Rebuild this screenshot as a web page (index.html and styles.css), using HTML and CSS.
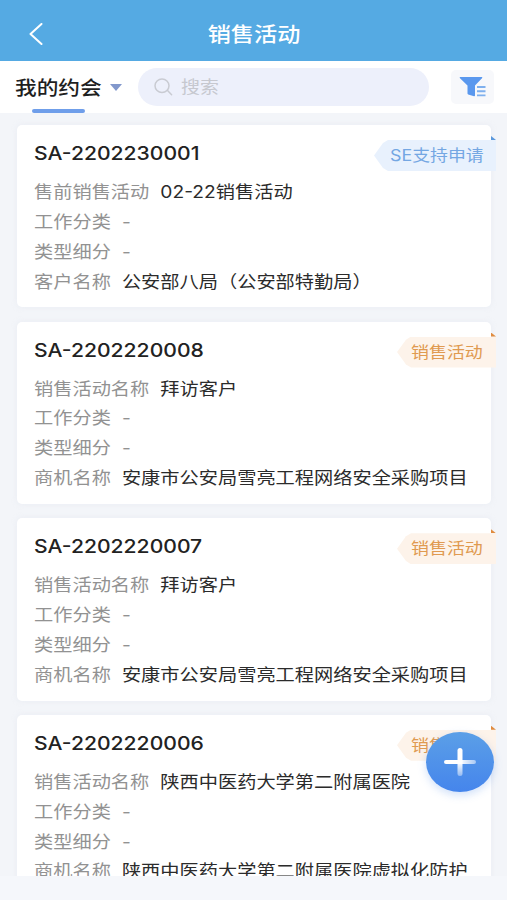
FILE: index.html
```html
<!DOCTYPE html>
<html lang="zh-CN">
<head>
<meta charset="utf-8">
<title>销售活动</title>
<link rel="stylesheet" href="styles.css">
</head>
<body>
<div class="app">
  <header class="header">
    <svg class="back" width="14" height="22" viewBox="0 0 14 22"><path d="M12.5 1 1.5 11l11 10" fill="none" stroke="#fff" stroke-width="2" stroke-linecap="round" stroke-linejoin="round"/></svg>
    <h1 class="header-title wide">销售活动</h1>
  </header>
  <div class="toolbar">
    <div class="tab"><span class="wide tab-label">我的约会</span><i class="caret"></i></div>
    <div class="search">
      <svg width="19" height="18" viewBox="0 0 19 18"><g fill="none" stroke="#c9cbd2" stroke-width="1.5" stroke-linecap="round"><ellipse cx="8" cy="7.7" rx="7" ry="6.7"/><path d="m13.3 12.3 4.3 4.4"/></g></svg>
      <span class="wide placeholder">搜索</span>
    </div>
    <button class="filter" aria-label="筛选"><svg width="28" height="22" viewBox="0 0 28 22"><path d="M1 1h22q.7.500 0 1.300L16 9.500v10q0 1-1 .7L9.200 18.500q-.7-.3-.7-1V9.500L1 2.300Q.3 1.500 1 1z" fill="#5a98ee"/><path d="M18 11h8.500M18 15.200h8.500M18 19.400h8.500" stroke="#7fb0ee" stroke-width="1.900"/></svg></button>
  </div>
  <main class="list">
    <article class="card">
      <h2 class="wide code">SA-2202230001</h2>
      <p class="wide row"><span class="label">售前销售活动</span><span>02-22销售活动</span></p>
      <p class="wide row"><span class="label">工作分类</span><span class="none">-</span></p>
      <p class="wide row"><span class="label">类型细分</span><span class="none">-</span></p>
      <p class="wide row"><span class="label">客户名称</span><span>公安部八局（公安部特勤局）</span></p>
      <div class="badge blue"><span class="wide">SE支持申请</span></div>
    </article>
    <article class="card">
      <h2 class="wide code">SA-2202220008</h2>
      <p class="wide row"><span class="label">销售活动名称</span><span>拜访客户</span></p>
      <p class="wide row"><span class="label">工作分类</span><span class="none">-</span></p>
      <p class="wide row"><span class="label">类型细分</span><span class="none">-</span></p>
      <p class="wide row"><span class="label">商机名称</span><span>安康市公安局雪亮工程网络安全采购项目</span></p>
      <div class="badge"><span class="wide">销售活动</span></div>
    </article>
    <article class="card">
      <h2 class="wide code">SA-2202220007</h2>
      <p class="wide row"><span class="label">销售活动名称</span><span>拜访客户</span></p>
      <p class="wide row"><span class="label">工作分类</span><span class="none">-</span></p>
      <p class="wide row"><span class="label">类型细分</span><span class="none">-</span></p>
      <p class="wide row"><span class="label">商机名称</span><span>安康市公安局雪亮工程网络安全采购项目</span></p>
      <div class="badge"><span class="wide">销售活动</span></div>
    </article>
    <article class="card">
      <h2 class="wide code">SA-2202220006</h2>
      <p class="wide row"><span class="label">销售活动名称</span><span>陕西中医药大学第二附属医院</span></p>
      <p class="wide row"><span class="label">工作分类</span><span class="none">-</span></p>
      <p class="wide row"><span class="label">类型细分</span><span class="none">-</span></p>
      <p class="wide row"><span class="label">商机名称</span><span>陕西中医药大学第二附属医院虚拟化防护</span></p>
      <div class="badge"><span class="wide">销售活动</span></div>
    </article>
  </main>
  <button class="fab" aria-label="新增"><svg width="32" height="28" viewBox="0 0 32 28"><defs><linearGradient id="h"><stop offset="0" stop-color="#fff"/><stop offset=".5" stop-color="#fff"/><stop offset="1" stop-color="#fff" stop-opacity=".5"/></linearGradient><linearGradient id="v" x2="0" y2="1"><stop offset="0" stop-color="#fff"/><stop offset=".5" stop-color="#fff"/><stop offset="1" stop-color="#fff" stop-opacity=".4"/></linearGradient></defs><rect y="12" width="32" height="4" rx="2" fill="url(#h)"/><rect x="13.500" width="5" height="28" rx="2.500" fill="url(#v)"/></svg></button>
</div>
</body>
</html>
```
FILE: styles.css
```css
* { box-sizing: border-box; }
body { margin: 0; font-family: Inter, "Noto Sans CJK SC", sans-serif; color: #2b2b2b; background: #f5f7fb; }
h1, h2, p { margin: 0; font-weight: 400; }
button { border: 0; padding: 0; }
.app { position: relative; width: 507px; height: 900px; overflow: hidden; display: flex; flex-direction: column; }
/* Glyphs are set slightly extended throughout. */
.wide { display: block; width: max-content; white-space: nowrap; transform: scaleX(1.13); transform-origin: left center; }
.header { flex: none; height: 61px; padding-top: 8px; background: #55aae3; display: flex; align-items: center; justify-content: center; position: relative; }
.back { position: absolute; left: 29px; top: 23px; }
.header-title { font-size: 20.5px; line-height: 30px; font-weight: 500; color: #fff; transform-origin: center; }
.toolbar { flex: none; height: 52px; background: #fff; display: flex; align-items: center; padding-left: 15px; }
.tab { position: relative; width: 123px; height: 52px; display: flex; align-items: center; }
.tab::after { content: ""; position: absolute; left: 17px; bottom: 0; width: 53px; height: 4px; border-radius: 2px; background: #6f9eea; }
.tab-label { font-size: 19.2px; font-weight: 500; color: #1f1f1f; }
.caret { margin-left: 18px; border: 6px solid transparent; border-top: 7px solid #8298cc; border-bottom: 0; }
.search { width: 291px; height: 38px; border-radius: 19px; background: #edf0fb; display: flex; align-items: center; padding-left: 16px; gap: 7.5px; }
.placeholder { font-size: 16.8px; color: #c6c8cf; transform: translateY(-1px) scaleX(1.13); }
.filter { margin-left: 22px; width: 43px; height: 34px; border-radius: 5px; background: #f7f8fb; display: flex; align-items: center; justify-content: center; }
.list { height: 763px; flex: none; overflow: hidden; padding: 12px 16px 0 17px; display: flex; flex-direction: column; gap: 14.2px; background: #f3f5f9; }
.card { position: relative; flex: none; height: 182.4px; padding: 13px 0 0 16.500px; background: #fff; border-radius: 5px; box-shadow: 0 0 5px rgba(225, 230, 240, .5); }
.code { font-size: 18.700px; line-height: 32px; font-weight: 500; margin-bottom: 8px; color: #222; }
.row { display: flex; gap: 9.800px; font-size: 17px; line-height: 29.9px; height: 29.9px; }
.label, .none { color: #929292; }
.badge { position: absolute; right: -5px; top: 15px; height: 31px; width: 99px; padding-left: 14px; color: #e09a50; font-size: 15.9px; line-height: 31px; background: #fdf3ea; clip-path: polygon(0 50%, 9px 10%, 14px 0, 100% 0, 100% 100%, 14px 100%, 9px 90%); }
/* Folded corner of the ribbon. */
.card::after { content: ""; position: absolute; right: -5px; top: 11px; width: 5px; height: 4px; clip-path: polygon(0 0, 100% 100%, 0 100%); background: #e08b3e; }
.card:first-child::after { background: #5a98dc; }
.badge.blue { width: 122px; padding-left: 15.500px; font-size: 15.800px; color: #74a7e3; background: #e8f1fd; }
.fab { position: absolute; left: 426px; top: 732px; width: 68px; height: 60px; border-radius: 50%; display: flex; align-items: center; justify-content: center; background: linear-gradient(#5b9fe7, #4585ec); box-shadow: 0 3px 9px rgba(85, 145, 235, .28); }
```
